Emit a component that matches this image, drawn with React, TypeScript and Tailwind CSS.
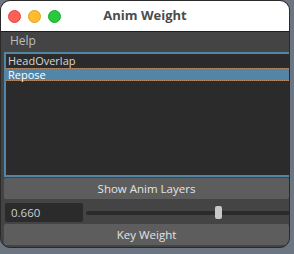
const font = { fontFamily: '"Lucida Grande", "Open Sans", "DejaVu Sans", sans-serif' };

const items = ["HeadOverlap", "Repose"];

const TrafficLights = () => (
  <div className="flex items-center gap-[7px] pl-[7px]">
    <span className="w-[13px] h-[13px] rounded-full bg-[#fe5f57] border border-[#e0443e]" />
    <span className="w-[13px] h-[13px] rounded-full bg-[#febc2e] border border-[#dea123]" />
    <span className="w-[13px] h-[13px] rounded-full bg-[#28c840] border border-[#1aab29]" />
  </div>
);

export default function App() {
  const selected = 1;
  const weight = 0.66;

  return (
    <div
      className="w-[294px] h-[254px] bg-[#6c7683] overflow-hidden flex"
      style={font}
    >
      <div className="w-[290px] h-[248px] rounded-[10px] overflow-hidden bg-[#444444] flex flex-col border border-[#2a2a2a]">
        <div className="relative h-[31px] bg-white flex items-center border-b border-[#1e1e1e] shrink-0">
          <TrafficLights />
          <div className="absolute inset-0 flex items-center justify-center text-[13px] font-bold text-[#4b4b4b]">
            Anim Weight
          </div>
        </div>
        <div className="h-[18px] flex items-center px-[9px] text-[12px] text-[#bdbdbd] shrink-0">
          Help
        </div>
        <div className="flex flex-col pl-[3px] pt-[2px]">
          <div className="h-[125px] bg-[#2b2b2b] border-2 border-[#5285a6] border-r-0 flex flex-col pt-[1px] text-[11px]">
            {items.map((name, i) => (
              <div
                key={name}
                className={
                  i === selected
                    ? "h-[13px] px-[2px] bg-[#5285a6] text-white border-y border-dotted border-[#b98a63] leading-[11px]"
                    : "h-[13px] px-[2px] text-[#d6d6d6] leading-[12px]"
                }
              >
                {name}
              </div>
            ))}
          </div>
          <div className="mt-[1px] h-[21px] bg-[#5d5d5d] rounded-[2px] flex items-center justify-center text-[11.5px] text-[#e4e4e4]">
            Show Anim Layers
          </div>
          <div className="mt-[3px] h-[21px] flex items-center gap-[3px] pl-[1px]">
            <div className="w-[78px] h-[19px] bg-[#2b2b2b] rounded-[2px] flex items-center px-[6px] text-[11.5px] text-[#cfcfcf]">
              {weight.toFixed(3)}
            </div>
            <div className="relative flex-1 h-[19px] flex items-center">
              <div className="w-full h-[4px] bg-[#2b2b2b] rounded-l-full" />
              <div
                className="absolute top-[3px] w-[7px] h-[13px] bg-[#c8c8c8] rounded-[2px]"
                style={{ left: `calc(${weight} * (100% - 7px))` }}
              />
            </div>
          </div>
          <div className="mt-[1px] h-[21px] bg-[#5d5d5d] rounded-[2px] flex items-center justify-center text-[11.5px] text-[#e4e4e4]">
            Key Weight
          </div>
        </div>
      </div>
    </div>
  );
}
